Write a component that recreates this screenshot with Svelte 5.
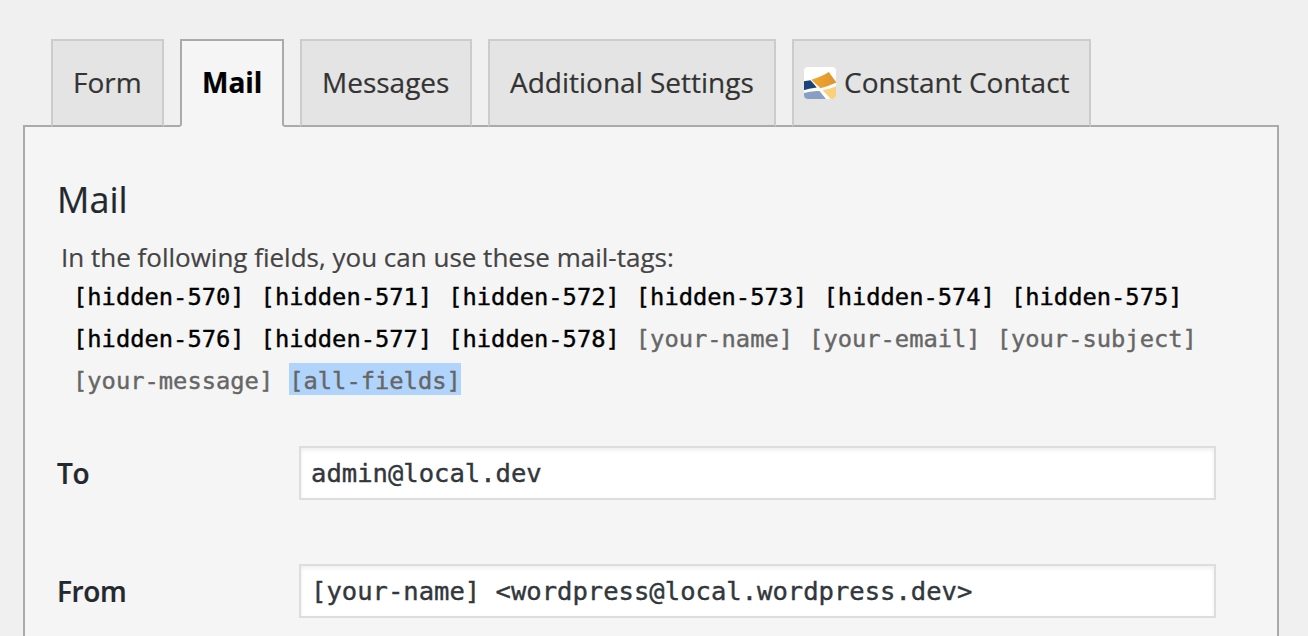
<script>
  const tabs = [
    { id: 'form', label: 'Form', width: 113 },
    { id: 'mail', label: 'Mail', width: 104, active: true },
    { id: 'messages', label: 'Messages', width: 172 },
    { id: 'settings', label: 'Additional Settings', width: 288 },
    { id: 'contact', label: 'Constant Contact', width: 299, icon: true }
  ];
  const tagRows = [
    ['hidden-570', 'hidden-571', 'hidden-572', 'hidden-573', 'hidden-574', 'hidden-575'],
    ['hidden-576', 'hidden-577', 'hidden-578', 'your-name', 'your-email', 'your-subject'],
    ['your-message', 'all-fields']
  ];
  const fields = [
    { label: 'To', value: 'admin@local.dev' },
    { label: 'From', value: '[your-name] <wordpress@local.wordpress.dev>' }
  ];
</script>

<main class="page">
  <nav class="tabs">
    {#each tabs as tab (tab.id)}
      <div class="tab {tab.id}" class:active={tab.active} style:width="{tab.width}px">
        {#if tab.icon}
          <svg class="logo" viewBox="0 0 32 32" width="32" height="32">
            <defs>
              <clipPath id="tile"><rect width="32" height="32" rx="4" /></clipPath>
              <linearGradient id="gold" x1="0" y1="0" x2="1" y2="0">
                <stop offset="0" stop-color="#f2a82c" />
                <stop offset="1" stop-color="#df9330" />
              </linearGradient>
              <filter id="soft"><feGaussianBlur stdDeviation="0.6" /></filter>
            </defs>
            <g clip-path="url(#tile)">
              <rect width="32" height="32" fill="#fff" />
              <g filter="url(#soft)">
                <path d="M-2 14.5L6.5 13.3L12.8 20.5Q5 21.5 -2 23.7Z" fill="#1d4379" />
                <path d="M7.4 12.8Q18 9.5 24.8 5L32.4 15.5Q25 19 16.5 21.2Z" fill="url(#gold)" />
                <path d="M-2 26.5Q7 23.5 15.5 24L23.5 34H-2Z" fill="#879fc5" />
                <path d="M18.6 23.3Q27 21.7 34 18.4V34H28.8Z" fill="#fbd07c" />
              </g>
            </g>
          </svg>
        {/if}
        <span class="text">{tab.label}</span>
      </div>
    {/each}
  </nav>

  <section class="panel">
    <h2>Mail</h2>
    <p class="intro"><span class="text">In the following fields, you can use these mail-tags:</span></p>
    <div class="tags">
      {#each tagRows as row}
        <div class="tag-row">
          {#each row as tag (tag)}
            <span class="tag" class:unused={tag.startsWith('hidden')} class:selected={tag === 'all-fields'}>[{tag}]</span>
          {/each}
        </div>
      {/each}
    </div>
    <div class="fields">
      {#each fields as field (field.label)}
        <div class="field">
          <span class="label">{field.label}</span>
          <div class="input">{field.value}</div>
        </div>
      {/each}
    </div>
  </section>
</main>

<style>
  :global(body) {
    margin: 0;
    background: #f0f0f0;
    overflow: hidden;
  }
  .page {
    box-sizing: border-box;
    height: 636px;
    padding: 39px 29px 0 23px;
    overflow: hidden;
    display: flex;
    flex-direction: column;
    background: #f0f0f0;
    font-family: 'Open Sans', sans-serif;
    color: #23282d;
    -webkit-text-stroke: 0.2px currentColor;
  }
  .tabs {
    display: flex;
    gap: 16px;
    padding-left: 28px;
    margin-bottom: -2px;
    position: relative;
    z-index: 1;
  }
  .tab {
    box-sizing: border-box;
    flex: none;
    height: 88px;
    padding: 0 0 2px 20px;
    border: 2px solid #ccc;
    border-bottom-color: #aaa;
    background: #e4e4e4;
    color: #333;
    font-size: 28px;
    line-height: 82px;
    white-space: nowrap;
    display: flex;
    align-items: center;
  }
  .tab.active {
    border-color: #aaa;
    border-bottom-color: #f5f5f5;
    background: #f5f5f5;
    color: #000;
    font-weight: 700;
  }
  .tab.contact {
    padding-left: 10px;
    gap: 8px;
  }
  .logo {
    flex: none;
    margin-top: 2px;
  }
  .panel {
    flex: none;
    box-sizing: border-box;
    height: 540px;
    padding: 49px 32px 0;
    border: 2px solid #aaa;
    background: #f5f5f5;
  }
  h2 {
    margin: 0;
    font-size: 36px;
    line-height: 48px;
    font-weight: 400;
  }
  .intro {
    margin: 15px 0 0 4px;
    font-size: 26px;
    line-height: 36px;
    color: #444;
    white-space: nowrap;
  }
  .tags {
    padding: 0 0 0 16px;
    font-family: 'DejaVu Sans Mono', monospace;
    font-size: 23.75px;
    color: #666;
    -webkit-text-stroke: 0.4px currentColor;
  }
  .tag-row {
    display: flex;
    align-items: center;
    gap: 16px;
    height: 42px;
  }
  .tag {
    height: 32px;
    line-height: 34px;
    white-space: nowrap;
    -webkit-text-stroke: 0.4px currentColor;
  }
  .unused {
    color: #000;
  }
  .selected {
    background: #b0d4fb;
    margin-top: -2px;
    line-height: 36px;
  }
  .fields {
    display: flex;
    flex-direction: column;
    gap: 64px;
    padding-top: 45px;
  }
  .field {
    display: flex;
    align-items: center;
  }
  .label {
    width: 242px;
    font-size: 28px;
    line-height: 54px;
    font-weight: 600;
    letter-spacing: -0.4px;
  }
  .input {
    box-sizing: border-box;
    width: 917px;
    height: 54px;
    padding-left: 10px;
    border: 2px solid #ddd;
    background: #fff;
    box-shadow: inset 0 2px 4px rgba(0, 0, 0, 0.07);
    color: #32373c;
    font-family: 'DejaVu Sans Mono', monospace;
    font-size: 25.55px;
    line-height: 50px;
    white-space: nowrap;
    -webkit-text-stroke: 0.4px currentColor;
  }
</style>
